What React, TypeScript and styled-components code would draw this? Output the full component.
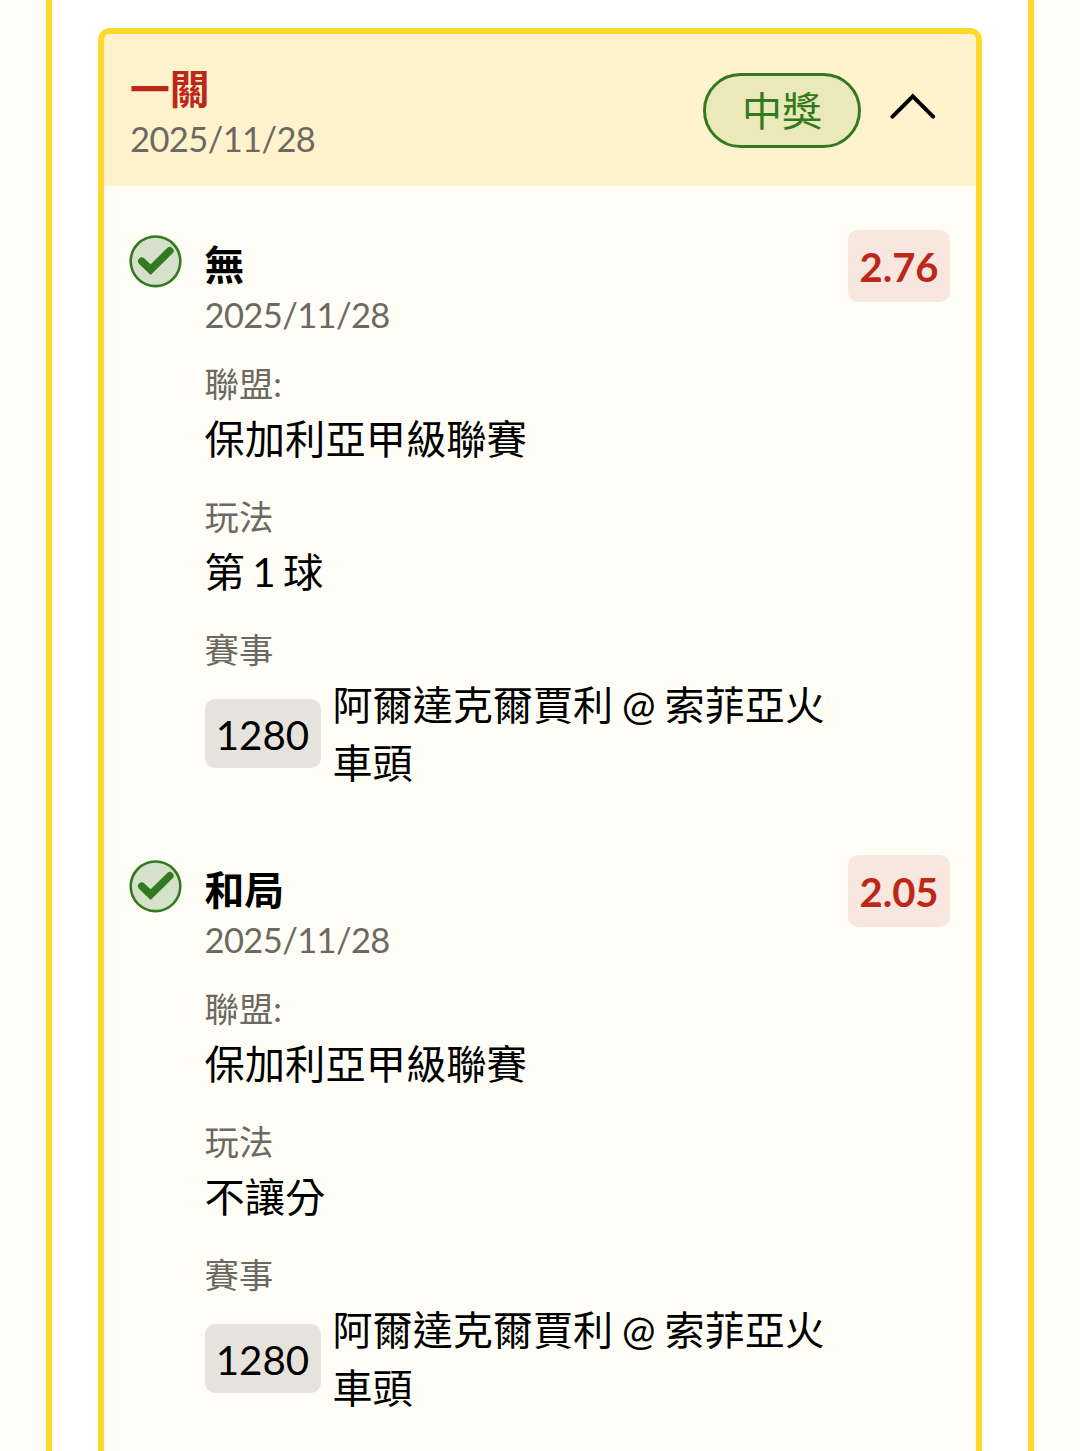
import React from "react";
import styled, { createGlobalStyle } from "styled-components";

const Global = createGlobalStyle`
  * { box-sizing: border-box; }
  body { margin: 0; background: #fffdf5; font-family: Lato, "Noto Sans CJK TC", sans-serif; color: #000; }
`;
const Page = styled.main`
  width: 1080px; height: 1451px; overflow: hidden; padding: 0 46px; background: #fffdf5;
`;
const Sheet = styled.section`
  height: 1451px; padding: 28px 46px 0; background: #fff;
  border: solid #ffd82d; border-width: 0 6px;
`;
const Card = styled.article`
  height: 1500px; border: 6px solid #ffd82d; border-radius: 12px; background: #fffef6; overflow: hidden;
`;
const Header = styled.header`
  height: 152px; padding: 0 40px 0 26px; background: #fff3cd;
  display: flex; align-items: flex-start;
`;
const Heading = styled.div`flex: 1; padding-top: 29px;`;
const Title = styled.h2<{ $red?: boolean }>`
  margin: 0; font-size: 39.8px; line-height: 51px; font-weight: 700; color: ${(p) => (p.$red ? "#bd2719" : "#000")};
`;
const DateText = styled.div`
  font-size: 34.5px; line-height: 50px; letter-spacing: -0.6px; color: #6b6962;
`;
const Status = styled.div`
  width: 158px; height: 75px; margin: 39px 29px 0 0; border: 3px solid #327a20; border-radius: 38px;
  background: #ebe8b9; color: #327a20; font-size: 40px; line-height: 70px; text-align: center;
`;
const Chevron = styled.svg`width: 46px; height: 28px; margin-top: 58px;`;
const Bet = styled.section`
  height: 625px; padding: 44px 26px 0 26px; display: flex; align-items: flex-start;
`;
const Check = styled.svg`width: 53px; height: 53px; margin: 5px 22.5px 0 -1px; flex: none;`;
const Details = styled.div`width: 640px; padding-top: 9px;`;
const Label = styled.div`margin-top: 24px; font-size: 34.4px; line-height: 50px; color: #6b6962;`;
const LeagueLabel = styled(Label)`margin-top: 19px;`;
const MatchLabel = styled(Label)`margin-bottom: -1px;`;
const Value = styled.div`margin-top: 1px; font-size: 40.3px; line-height: 58px; word-spacing: -2.9px;`;
const Match = styled.div`display: flex; align-items: center; gap: 12px;`;
const Code = styled.span`
  flex: none; width: 116px; height: 69px; border-radius: 10px; background: #e6e3dc;
  text-align: center; font-size: 40.3px; line-height: 72px;
`;
const Teams = styled.div`
  width: 510px; padding-top: 2px; font-size: 40.1px; line-height: 58px; word-spacing: -1.3px;
`;
const Odds = styled.div`
  margin-left: auto; width: 102px; height: 72px; border-radius: 10px; background: #f8e7df; color: #bd2719;
  text-align: center; font-size: 40px; line-height: 74px; font-weight: 700;
`;

const bets = [
  { pick: "無", odds: "2.76", play: "第 1 球" },
  { pick: "和局", odds: "2.05", play: "不讓分" },
];

export default function App() {
  return (
    <Page>
      <Global />
      <Sheet>
        <Card>
          <Header>
            <Heading>
              <Title $red>一關</Title>
              <DateText>2025/11/28</DateText>
            </Heading>
            <Status>中獎</Status>
            <Chevron viewBox="0 0 46 28" fill="none" stroke="#000" strokeWidth="4" strokeLinecap="round">
              <path d="M2.5 24.7 22.8 4.4l20.3 20.3" />
            </Chevron>
          </Header>
          {bets.map((bet) => (
            <Bet key={bet.pick}>
              <Check viewBox="0 0 53 53" fill="none" stroke="#327a20">
                <circle cx="26.5" cy="26.3" r="24.8" fill="#d6e1cb" strokeWidth="2.6" />
                <path d="M12.8 26.2 21.6 34.6 40.8 15.8" strokeWidth="7.6" strokeLinecap="round" />
              </Check>
              <Details>
                <Title>{bet.pick}</Title>
                <DateText>2025/11/28</DateText>
                <LeagueLabel>聯盟:</LeagueLabel>
                <Value>保加利亞甲級聯賽</Value>
                <Label>玩法</Label>
                <Value>{bet.play}</Value>
                <MatchLabel>賽事</MatchLabel>
                <Match>
                  <Code>1280</Code>
                  <Teams>阿爾達克爾賈利 @ 索菲亞火車頭</Teams>
                </Match>
              </Details>
              <Odds>{bet.odds}</Odds>
            </Bet>
          ))}
        </Card>
      </Sheet>
    </Page>
  );
}
